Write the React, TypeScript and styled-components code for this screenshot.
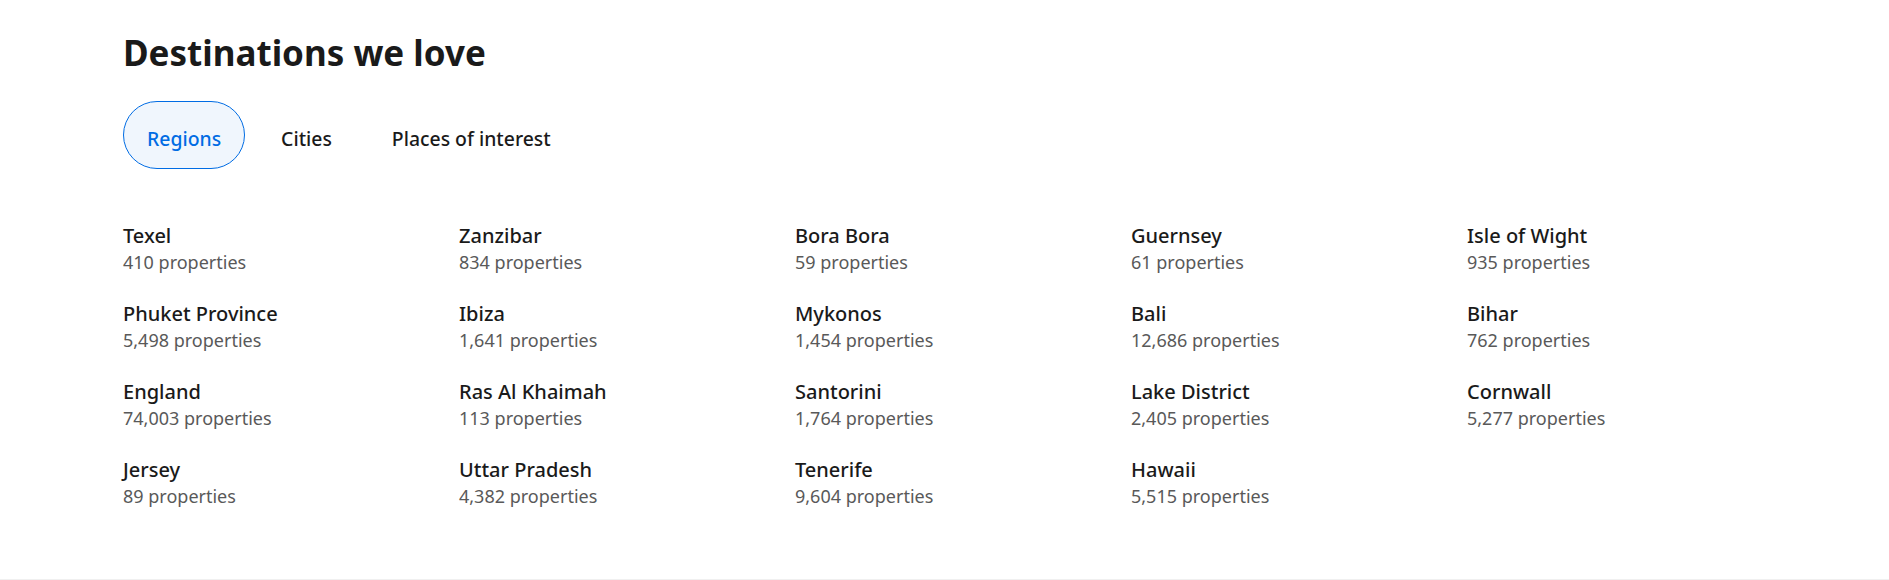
import React, { useState } from "react";
import styled, { createGlobalStyle } from "styled-components";

const GlobalStyle = createGlobalStyle`
  html, body {
    margin: 0;
    padding: 0;
    background: #ffffff;
  }
  body {
    font-family: "Noto Sans", "Open Sans", Arial, sans-serif;
    color: #1a1a1a;
  }
  * { box-sizing: border-box; }
`;

const Section = styled.section`
  height: 580px;
  padding: 35px 123px 0;
  border-bottom: 1px solid #f0f0f0;
`;

const Heading = styled.h2`
  margin: 0;
  font-size: 35px;
  line-height: 36px;
  font-weight: 700;
  color: #1a1a1a;
`;

const TabBar = styled.div`
  display: flex;
  align-items: center;
  gap: 12px;
  margin-top: 30px;
`;

const Tab = styled.button<{ $active?: boolean }>`
  font-family: inherit;
  font-size: 19.4px;
  line-height: 28px;
  font-weight: 500;
  padding: 23px 23px 15px;
  border-radius: 34px;
  cursor: pointer;
  border: 1px solid ${(p) => (p.$active ? "#006ce4" : "transparent")};
  background: ${(p) => (p.$active ? "#f0f6fd" : "transparent")};
  color: ${(p) => (p.$active ? "#006ce4" : "#1a1a1a")};
`;

const Grid = styled.div`
  display: grid;
  grid-template-columns: repeat(5, 1fr);
  column-gap: 37px;
  row-gap: 26px;
  margin-top: 54px;
`;

const Item = styled.a`
  display: flex;
  flex-direction: column;
  text-decoration: none;
`;

const Name = styled.span`
  font-size: 20px;
  line-height: 26px;
  font-weight: 500;
  color: #1a1a1a;
`;

const Count = styled.span`
  font-size: 18px;
  line-height: 26px;
  font-weight: 400;
  color: #595959;
`;

type Dest = { name: string; count: string } | null;

const rows: Dest[][] = [
  [
    { name: "Texel", count: "410" },
    { name: "Zanzibar", count: "834" },
    { name: "Bora Bora", count: "59" },
    { name: "Guernsey", count: "61" },
    { name: "Isle of Wight", count: "935" },
  ],
  [
    { name: "Phuket Province", count: "5,498" },
    { name: "Ibiza", count: "1,641" },
    { name: "Mykonos", count: "1,454" },
    { name: "Bali", count: "12,686" },
    { name: "Bihar", count: "762" },
  ],
  [
    { name: "England", count: "74,003" },
    { name: "Ras Al Khaimah", count: "113" },
    { name: "Santorini", count: "1,764" },
    { name: "Lake District", count: "2,405" },
    { name: "Cornwall", count: "5,277" },
  ],
  [
    { name: "Jersey", count: "89" },
    { name: "Uttar Pradesh", count: "4,382" },
    { name: "Tenerife", count: "9,604" },
    { name: "Hawaii", count: "5,515" },
    null,
  ],
];

const tabs = ["Regions", "Cities", "Places of interest"];

export default function App() {
  const [active, setActive] = useState(0);
  return (
    <>
      <GlobalStyle />
      <Section>
        <Heading>Destinations we love</Heading>
        <TabBar>
          {tabs.map((t, i) => (
            <Tab key={t} $active={i === active} onClick={() => setActive(i)}>
              {t}
            </Tab>
          ))}
        </TabBar>
        <Grid>
          {rows.flat().map((d, i) =>
            d ? (
              <Item key={i} href="#">
                <Name>{d.name}</Name>
                <Count>{d.count} properties</Count>
              </Item>
            ) : (
              <div key={i} />
            )
          )}
        </Grid>
      </Section>
    </>
  );
}
